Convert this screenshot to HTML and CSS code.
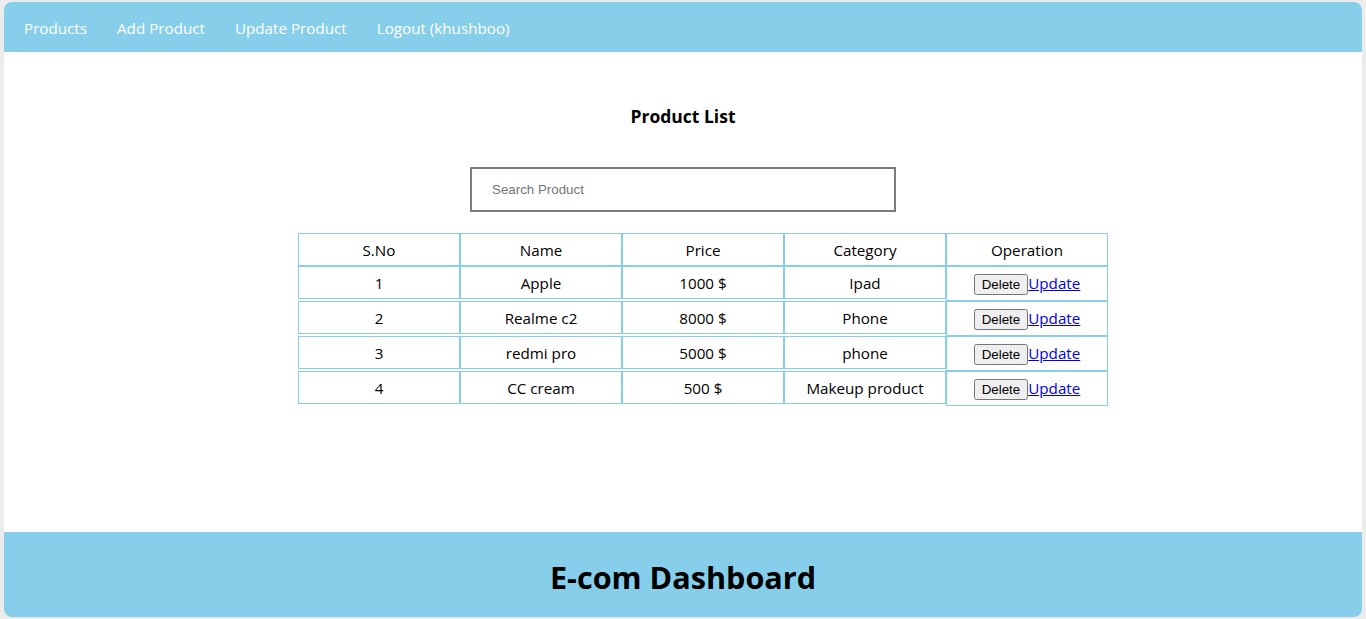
FILE: index.html
```html
<!DOCTYPE html>
<html lang="en">
<head>
<meta charset="utf-8">
<title>E-com Dashboard</title>
<link rel="stylesheet" href="styles.css">
</head>
<body>
<div class="app">
  <nav class="nav">
    <ul class="nav-ul">
      <li><a href="#">Products</a></li>
      <li><a href="#">Add Product</a></li>
      <li><a href="#">Update Product</a></li>
      <li><a href="#">Logout (khushboo)</a></li>
    </ul>
  </nav>
  <main class="main">
    <div class="product-list">
      <h3 class="title">Product List</h3>
      <input class="search" type="text" placeholder="Search Product">
      <ul class="row head"><li>S.No</li><li>Name</li><li>Price</li><li>Category</li><li>Operation</li></ul>
      <ul class="row"><li>1</li><li>Apple</li><li>1000 $</li><li>Ipad</li><li class="op"><button>Delete</button><a href="#">Update</a></li></ul>
      <ul class="row"><li>2</li><li>Realme c2</li><li>8000 $</li><li>Phone</li><li class="op"><button>Delete</button><a href="#">Update</a></li></ul>
      <ul class="row"><li>3</li><li>redmi pro</li><li>5000 $</li><li>phone</li><li class="op"><button>Delete</button><a href="#">Update</a></li></ul>
      <ul class="row"><li>4</li><li>CC cream</li><li>500 $</li><li>Makeup product</li><li class="op"><button>Delete</button><a href="#">Update</a></li></ul>
    </div>
  </main>
  <footer class="footer">
    <h1 class="footer-title">E-com Dashboard</h1>
  </footer>
</div>
</body>
</html>
```
FILE: styles.css
```css
html, body {
  margin: 0;
  padding: 0;
  height: 100%;
}
body {
  background: #ececec;
  font-family: "Open Sans", "Noto Sans", sans-serif;
}
.app {
  box-sizing: border-box;
  margin: 2px 4px;
  height: 615px;
  background: #fff;
  border-radius: 8px;
  overflow: hidden;
  display: flex;
  flex-direction: column;
}
.nav {
  background: #87ceeb;
  height: 50px;
  flex: none;
}
.nav-ul {
  list-style: none;
  margin: 0;
  padding: 2px 0 0 20px;
  box-sizing: border-box;
  display: flex;
  gap: 30px;
  height: 100%;
  align-items: center;
}
.nav-ul a {
  color: #fff;
  text-decoration: none;
  font-size: 15.2px;
  line-height: 21px;
}
.main {
  flex: 1;
}
.product-list {
  text-align: center;
}
.title {
  margin: 51px 0 0;
  font-size: 17.5px;
  line-height: 26px;
  font-weight: 700;
}
.search {
  display: block;
  box-sizing: border-box;
  margin: 38px auto 0;
  width: 426px;
  height: 45px;
  padding: 0 20px;
  border: 2px solid #7b7b7b;
  font-family: Arial, "Liberation Sans", sans-serif;
  font-size: 13.33px;
  outline: none;
}
.search::placeholder {
  color: #757575;
}
.row {
  margin: 0;
  padding-left: 40px;
  line-height: 0;
}
.row.head {
  margin-top: 21px;
}
.row li {
  list-style: none;
  display: inline-block;
  vertical-align: top;
  width: 150px;
  padding: 6px 5px 4px;
  border: 1px solid #87ceeb;
  font-size: 15.2px;
  line-height: 21px;
}
.row li.op {
  padding: 6px 5px 5px;
}
.row li button {
  font-family: Arial, "Liberation Sans", sans-serif;
  font-size: 13.33px;
}
.row li a {
  color: #0000ee;
}
.footer {
  background: #87ceeb;
  height: 85px;
  flex: none;
  display: flex;
  align-items: center;
  justify-content: center;
}
.footer-title {
  margin: 0;
  font-size: 30.6px;
  font-weight: 700;
  line-height: 40px;
  padding-top: 5px;
}
```
